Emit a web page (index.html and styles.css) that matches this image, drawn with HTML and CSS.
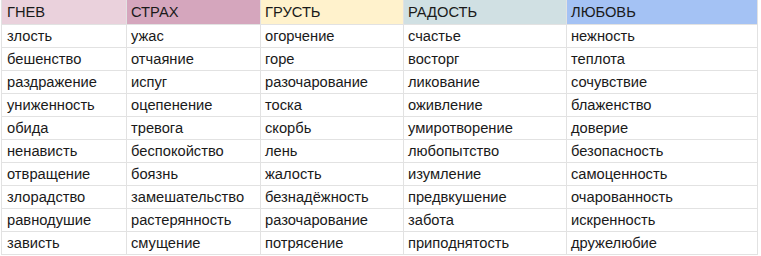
FILE: index.html
```html
<!DOCTYPE html>
<html lang="ru">
<head>
<meta charset="utf-8">
<link rel="stylesheet" href="styles.css">
</head>
<body>
<table class="sheet">
  <colgroup>
    <col class="c1"><col class="c2"><col class="c3"><col class="c4"><col class="c5">
  </colgroup>
  <thead>
    <tr>
      <th class="h-anger">ГНЕВ</th>
      <th class="h-fear">СТРАХ</th>
      <th class="h-sad">ГРУСТЬ</th>
      <th class="h-joy">РАДОСТЬ</th>
      <th class="h-love">ЛЮБОВЬ</th>
    </tr>
  </thead>
  <tbody>
    <tr><td>злость</td><td>ужас</td><td>огорчение</td><td>счастье</td><td>нежность</td></tr>
    <tr><td>бешенство</td><td>отчаяние</td><td>горе</td><td>восторг</td><td>теплота</td></tr>
    <tr><td>раздражение</td><td>испуг</td><td>разочарование</td><td>ликование</td><td>сочувствие</td></tr>
    <tr><td>униженность</td><td>оцепенение</td><td>тоска</td><td>оживление</td><td>блаженство</td></tr>
    <tr><td>обида</td><td>тревога</td><td>скорбь</td><td>умиротворение</td><td>доверие</td></tr>
    <tr><td>ненависть</td><td>беспокойство</td><td>лень</td><td>любопытство</td><td>безопасность</td></tr>
    <tr><td>отвращение</td><td>боязнь</td><td>жалость</td><td>изумление</td><td>самоценность</td></tr>
    <tr><td>злорадство</td><td>замешательство</td><td>безнадёжность</td><td>предвкушение</td><td>очарованность</td></tr>
    <tr><td>равнодушие</td><td>растерянность</td><td>разочарование</td><td>забота</td><td>искренность</td></tr>
    <tr><td>зависть</td><td>смущение</td><td>потрясение</td><td>приподнятость</td><td>дружелюбие</td></tr>
  </tbody>
</table>
</body>
</html>
```
FILE: styles.css
```css
html, body {
  margin: 0;
  padding: 0;
  background: #ffffff;
}
body {
  font-family: "Liberation Sans", Arial, sans-serif;
  font-size: 14.7px;
  color: #1a1a1a;
}
.sheet {
  border-collapse: collapse;
  table-layout: fixed;
  width: 756px;
  margin-left: 1px;
}
.c1 { width: 125px; }
.c2 { width: 134px; }
.c3 { width: 143px; }
.c4 { width: 163px; }
.c5 { width: 191px; }
.sheet th,
.sheet td {
  border: 1px solid #e2e2e2;
  padding: 0 0 0 4px;
  text-align: left;
  font-weight: normal;
  white-space: nowrap;
  overflow: hidden;
  vertical-align: middle;
  line-height: 17px;
}
.sheet th {
  height: 24px;
  border-top: none;
}
.sheet td {
  height: 22px;
}
.sheet tr > :first-child { padding-left: 5px; }
.h-anger { background: #ead1dc; }
.h-fear { background: #d5a6bd; }
.h-sad { background: #fff2cc; }
.h-joy { background: #d0e0e3; }
.h-love { background: #a4c2f4; }
```
